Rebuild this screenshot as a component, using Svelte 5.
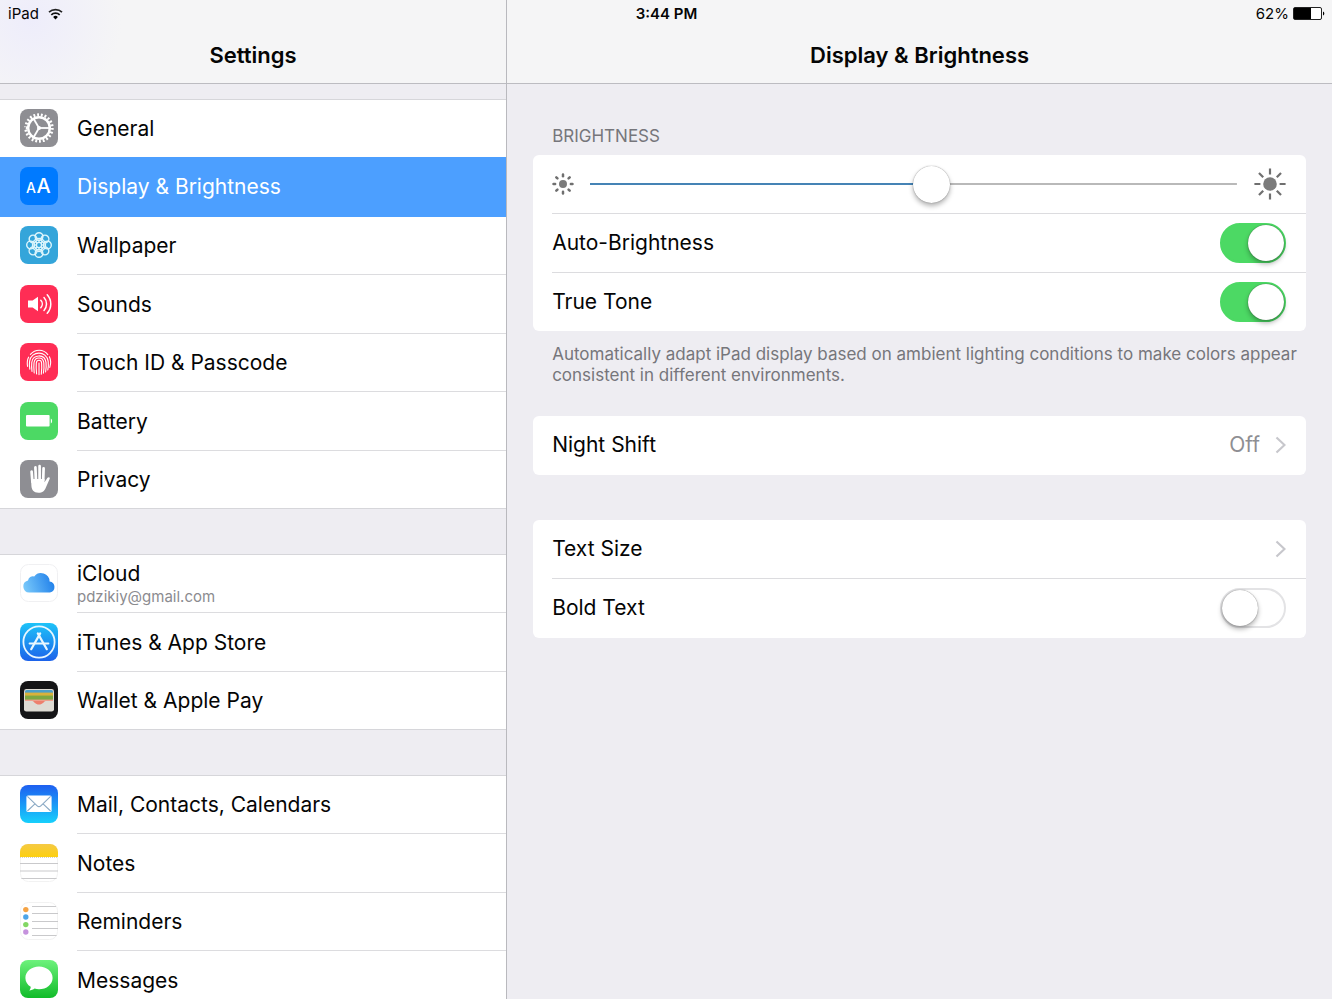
<script lang="ts">
	type Item = { id: string; label: string; detail?: string };

	const groups: Item[][] = [
		[
			{ id: 'general', label: 'General' },
			{ id: 'display', label: 'Display & Brightness' },
			{ id: 'wallpaper', label: 'Wallpaper' },
			{ id: 'sounds', label: 'Sounds' },
			{ id: 'touchid', label: 'Touch ID & Passcode' },
			{ id: 'battery', label: 'Battery' },
			{ id: 'privacy', label: 'Privacy' }
		],
		[
			{ id: 'icloud', label: 'iCloud', detail: 'pdzikiy@gmail.com' },
			{ id: 'store', label: 'iTunes & App Store' },
			{ id: 'wallet', label: 'Wallet & Apple Pay' }
		],
		[
			{ id: 'mail', label: 'Mail, Contacts, Calendars' },
			{ id: 'notes', label: 'Notes' },
			{ id: 'reminders', label: 'Reminders' },
			{ id: 'messages', label: 'Messages' }
		]
	];

	// Angles of the repeated icon parts
	const petals = [0, 45, 90, 135, 180, 225, 270, 315];
	const spokes = [0, 120, 240];

	// State
	let active = $state('display');
	let brightness = $state(53);
	let autoBrightness = $state(true);
	let trueTone = $state(true);
	let boldText = $state(false);

	function select(event: MouseEvent, id: string) {
		event.preventDefault();
		active = id;
	}
</script>

{#snippet icon(id: string)}
	<svg class="icon" viewBox="0 0 38 38" aria-hidden="true">
		{#if id === 'general'}
			<rect width="38" height="38" rx="8" fill="#8e8e93" />
			<g fill="none" stroke="#fff">
				<circle cx="19" cy="19" r="13.2" stroke-width="3" pathLength="44" stroke-dasharray="1 1" />
				<circle cx="19" cy="19" r="10.8" stroke-width="2.4" />
				{#each spokes as angle}
					<path d="M19 19H30" stroke-width="1.8" transform="rotate({angle} 19 19)" />
				{/each}
			</g>
			<circle cx="19" cy="19" r="2" fill="#fff" />
		{:else if id === 'display'}
			<rect width="38" height="38" rx="8" fill="#007aff" />
			<g fill="#fff" font-family="Inter, sans-serif" font-weight="500">
				<text x="6" y="26" font-size="14">A</text>
				<text x="16.5" y="26" font-size="20">A</text>
			</g>
		{:else if id === 'wallpaper'}
			<rect width="38" height="38" rx="8" fill="#34a5da" />
			<g fill="none" stroke="#dff6fc" stroke-width="1.4">
				{#each petals as angle}
					<circle cx="19" cy="10.6" r="3.9" transform="rotate({angle} 19 19)" />
				{/each}
				<circle cx="19" cy="19" r="6.6" stroke-width="1.2" />
				<circle cx="19" cy="19" r="2.6" />
				{#each petals as angle}
					<path d="M19 16.4v-3.6" stroke-width="1.2" transform="rotate({angle} 19 19)" />
				{/each}
			</g>
		{:else if id === 'sounds'}
			<rect width="38" height="38" rx="8" fill="#ff2d55" />
			<path d="M8 15.5h4.6L18 11.8v14.4l-5.4-3.8H8z" fill="#fff" />
			<g fill="none" stroke="#fff" stroke-width="1.5" stroke-linecap="round">
				<path d="M20.8 15.3a5.4 5.4 0 0 1 0 7.4" />
				<path d="M24 12.6a9.4 9.4 0 0 1 0 12.8" />
				<path d="M27.2 9.8a13.6 13.6 0 0 1 0 18.4" />
			</g>
		{:else if id === 'touchid'}
			<rect width="38" height="38" rx="8" fill="#ff2d55" />
			<g fill="none" stroke="#fff" stroke-width="1.1" stroke-linecap="round">
				<path d="M10.4 11.4c5-5.6 13-5.4 17.4.2" />
				<path d="M7.6 23.4c-.6-3.2-.6-6.4 1-9.2M29.4 13.8c1.8 3.6 1.4 7.4.4 10.6" />
				<path d="M9.8 26.2c-.6-3-.6-5-.2-8 1.6-10.6 17-11 18.6.2.4 3.2.2 5.6-.4 8.6" />
				<path d="M12 28.4c-.4-3.2-.6-6-.2-9.2 1-8.2 13-8.6 14.2.2.4 3.2.2 6-.4 9.6" />
				<path d="M14.2 30c-.4-3.6-.6-6.8-.2-10.2.8-6.2 9-6.4 9.8 0 .4 3.4.2 6.6-.4 10.4" />
				<path d="M16.6 31c-.4-3.8-.6-7.4-.3-11 .4-3.6 5-3.6 5.3 0 .3 3.6.2 7.2-.3 11.2" />
				<path d="M19 20v11.6" />
			</g>
		{:else if id === 'battery'}
			<rect width="38" height="38" rx="8" fill="#4cd964" />
			<rect x="6" y="13" width="23.6" height="11.6" rx="1" fill="#fff" />
			<path d="M30.8 16.4c1.8 1 1.8 4 0 5z" fill="#fff" />
		{:else if id === 'privacy'}
			<rect width="38" height="38" rx="8" fill="#8e8e93" />
			<g stroke="#fff" stroke-width="2.7" stroke-linecap="round" fill="none">
				<path d="M12.4 22L11.6 11.6M15.9 20L15.4 7.4M19.6 20V6.2M23.2 20l.4-11.6" />
			</g>
			<path
				d="M11.1 19h13.4v3.2l3-4.4c1-1.2 2.8-.4 2.2 1l-3.8 8.6c-1.400 3.4-3.4 5.400-7.400 5.400-5 0-6.8-3.200-7.100-7z"
				fill="#fff"
			/>
		{:else if id === 'icloud'}
			<defs>
				<linearGradient id="cloud-fill" x1="0" y1="0.6" x2="1" y2="0.4">
					<stop offset="0" stop-color="#78c8fa" />
					<stop offset="1" stop-color="#1f7fea" />
				</linearGradient>
			</defs>
			<rect x="0.5" y="0.5" width="37" height="37" rx="8" fill="#fff" stroke="#f0f0f2" />
			<path
				d="M9.2 28.600a6.200 6.200 0 0 1-1.200-12.200 5 5 0 0 1 6.200-4A8.600 8.600 0 0 1 29.600 17.400a5.700 5.700 0 0 1 .4 11.200z"
				fill="url(#cloud-fill)"
			/>
		{:else if id === 'store'}
			<defs>
				<linearGradient id="store-fill" x1="0" y1="0" x2="0" y2="1">
					<stop offset="0" stop-color="#1ec3f8" />
					<stop offset="1" stop-color="#1c62ea" />
				</linearGradient>
			</defs>
			<rect width="38" height="38" rx="8" fill="url(#store-fill)" />
			<g fill="none" stroke="#e8f7ff" stroke-linecap="round">
				<circle cx="19" cy="19" r="15.6" stroke-width="1.8" />
				<path d="M20.2 10.4L11.2 26.2M17.800 10.4l9 15.800" stroke-width="2.2" />
				<path d="M9.6 20.6h18.8" stroke-width="2" />
			</g>
		{:else if id === 'wallet'}
			<rect width="38" height="38" rx="8" fill="#151517" />
			<rect x="4" y="8" width="30" height="22.6" rx="2.4" fill="#dedbd4" />
			<path d="M5 13.2v-2.6a1.6 1.6 0 0 1 1.6-1.6h24.8a1.6 1.6 0 0 1 1.6 1.6v2.6z" fill="#4c9fc9" />
			<path d="M5 11.6h28v5H5z" fill="#d9b13c" />
			<path d="M5 14.6h28v5H5z" fill="#7da843" />
			<path d="M5 18.6h28v2H5z" fill="#ee9f8d" />
			<path d="M5 20h28v8.7a1 1 0 0 1-1 1H6a1 1 0 0 1-1-1z" fill="#dedbd4" />
			<path d="M12.400 20h13.200c-2 .6-2.800 3.600-6.600 3.600s-4.600-3-6.600-3.600z" fill="#ee7f6d" />
		{:else if id === 'mail'}
			<defs>
				<linearGradient id="mail-fill" x1="0" y1="0" x2="0" y2="1">
					<stop offset="0" stop-color="#1e5ff0" />
					<stop offset="1" stop-color="#17d0fc" />
				</linearGradient>
			</defs>
			<rect width="38" height="38" rx="8" fill="url(#mail-fill)" />
			<rect x="6.4" y="10.4" width="25.2" height="16.6" rx="1.6" fill="#fff" />
			<path
				d="M7.4 11.4l9.8 9.4c1 1 2.6 1 3.6 0l9.8-9.4M7.4 26l7.8-7.4M30.6 26l-7.8-7.4"
				fill="none"
				stroke="#8aa9c4"
				stroke-width="1.1"
			/>
		{:else if id === 'notes'}
			<defs>
				<linearGradient id="notes-fill" x1="0" y1="0" x2="0" y2="1">
					<stop offset="0" stop-color="#f5c944" />
					<stop offset="1" stop-color="#fdd00f" />
				</linearGradient>
			</defs>
			<rect x="0.5" y="0.5" width="37" height="37" rx="8" fill="#fff" stroke="#f2f2f2" />
			<path d="M0 13V8a8 8 0 0 1 8-8h22a8 8 0 0 1 8 8v5z" fill="url(#notes-fill)" />
			<path d="M0 19.5h38M0 27h38M1.4 34.5h35.2" stroke="#c9c9cb" />
			<path d="M0 13.5h38" stroke="#d8d2bd" stroke-dasharray="1 1" />
		{:else if id === 'reminders'}
			<rect x="0.5" y="0.5" width="37" height="37" rx="8" fill="#fff" stroke="#f2f2f2" />
			<circle cx="5.8" cy="7.6" r="2.7" fill="#f5a344" />
			<circle cx="5.8" cy="15" r="2.7" fill="#4da5e8" />
			<circle cx="5.8" cy="22.6" r="2.7" fill="#83d765" />
			<circle cx="5.8" cy="30" r="2.7" fill="#c592dd" />
			<path d="M12 4.5h24M12 11.5h26M12 19.5h26M12 26.5h26M12 33.5h24.6" stroke="#c9c9cb" />
		{:else if id === 'messages'}
			<defs>
				<linearGradient id="messages-fill" x1="0" y1="0" x2="0" y2="1">
					<stop offset="0" stop-color="#6df27c" />
					<stop offset="1" stop-color="#11bb29" />
				</linearGradient>
			</defs>
			<rect width="38" height="38" rx="8" fill="url(#messages-fill)" />
			<path
				d="M19 6.6c7.6 0 13.6 5 13.6 11.3S26.6 29.2 19 29.2c-1.6 0-3-.2-4.4-.6-1.2 1-3.4 1.9-5.4 1.9 1-.9 1.6-2.3 1.5-3.7-3.2-2-5.3-5.2-5.3-8.9C5.4 11.6 11.4 6.6 19 6.6z"
				fill="#fff"
			/>
		{/if}
	</svg>
{/snippet}

{#snippet sun(size: string)}
	<svg class="sun {size}" viewBox="0 0 32 32" aria-hidden="true">
		<circle cx="16" cy="16" r={size === 'large' ? 6.8 : 5.8} fill="#7b7b7b" />
		{#each petals as angle}
			<path
				d={size === 'large' ? 'M16 0.4v6' : 'M16 2.2v2.4'}
				stroke="#6f6f6f"
				stroke-width={size === 'large' ? 2.2 : 3.6}
				stroke-linecap={size === 'large' ? 'butt' : 'round'}
				transform="rotate({angle} 16 16)"
			/>
		{/each}
	</svg>
{/snippet}

{#snippet chevron()}
	<svg class="chevron" viewBox="0 0 11 18" aria-hidden="true">
		<path d="M1.5 1.5L9.5 9l-8 7.5" fill="none" stroke="#c7c7cc" stroke-width="2.2" />
	</svg>
{/snippet}

<div class="screen">
	<div class="status-bar">
		<span class="carrier">
			iPad
			<svg class="wifi" viewBox="0 0 15 12" aria-label="Wi-Fi">
				<path d="M1 4.2a9.4 9.4 0 0 1 13 0" fill="none" stroke="#222" stroke-width="1.6" />
				<path d="M3.3 6.8a6 6 0 0 1 8.4 0" fill="none" stroke="#111" stroke-width="1.7" />
				<path d="M7.5 11.4L5.1 8.9a3.5 3.5 0 0 1 4.8 0z" fill="#000" />
			</svg>
		</span>
		<time>3:44 PM</time>
		<span class="power">
			62%
			<svg class="cell" viewBox="0 0 32 13" aria-hidden="true">
				<rect x="0.5" y="0.5" width="28" height="12" rx="1.5" fill="#fff" stroke="#222" />
				<rect x="1" y="1" width="17" height="11" fill="#000" />
				<path d="M30 4.5c1.8.6 1.8 3.4 0 4z" fill="#000" />
			</svg>
		</span>
	</div>

	<aside class="sidebar">
		<header class="bar tinted"><h1>Settings</h1></header>
		<nav aria-label="Settings">
			{#each groups as group}
				<ul class="group">
					{#each group as item}
						<li>
							<a
								class="item"
								class:active={active === item.id}
								href={`#${item.id}`}
								aria-current={active === item.id ? 'page' : undefined}
								onclick={(event) => select(event, item.id)}
							>
								{@render icon(item.id)}
								<span class="text">
									<span class="label">{item.label}</span>
									{#if item.detail}
										<span class="detail">{item.detail}</span>
									{/if}
								</span>
							</a>
						</li>
					{/each}
				</ul>
			{/each}
		</nav>
	</aside>

	<main class="pane">
		<header class="bar"><h1>Display &amp; Brightness</h1></header>
		<div class="content">
			<section>
				<h2><label for="brightness">BRIGHTNESS</label></h2>
				<div class="card">
					<div class="row">
						{@render sun('small')}
						<input
							id="brightness"
							class="slider"
							type="range"
							min="0"
							max="100"
							bind:value={brightness}
							style="--fill: {brightness}%"
						/>
						{@render sun('large')}
					</div>
					<label class="row">
						<span>Auto-Brightness</span>
						<input class="switch" type="checkbox" bind:checked={autoBrightness} />
					</label>
					<label class="row">
						<span>True Tone</span>
						<input class="switch" type="checkbox" bind:checked={trueTone} />
					</label>
				</div>
				<p class="note">
					Automatically adapt iPad display based on ambient lighting conditions to make colors appear
					consistent in different environments.
				</p>
			</section>

			<section class="card">
				<button class="row" type="button">
					<span>Night Shift</span>
					<span class="value">Off {@render chevron()}</span>
				</button>
			</section>

			<section class="card">
				<button class="row" type="button">
					<span>Text Size</span>
					<span class="value">{@render chevron()}</span>
				</button>
				<label class="row">
					<span>Bold Text</span>
					<input class="switch" type="checkbox" bind:checked={boldText} />
				</label>
			</section>
		</div>
	</main>
</div>

<style>
	:global(body) {
		background: #eeedf2;
	}

	.screen {
		display: grid;
		grid-template-columns: 38% 1fr;
		grid-template-rows: 28px 1fr;
		height: 100vh;
		overflow: hidden;
		background: #eeedf2;
		color: #050505;
		font-family: Inter, 'Liberation Sans', sans-serif;
		font-size: 21px;
		line-height: 26px;
	}

	h1,
	h2,
	p,
	ul {
		margin: 0;
		padding: 0;
	}

	/* The status bar shares its grid row with the top of both panes */
	.status-bar {
		grid-area: 1 / 1 / 2 / 3;
		z-index: 1;
		display: grid;
		grid-template-columns: 1fr auto 1fr;
		align-items: center;
		padding: 0 7px 1px 8px;
		font-size: 15px;
		line-height: 18px;
	}

	.status-bar time {
		font-weight: 600;
	}

	.carrier,
	.power {
		display: flex;
		align-items: center;
		gap: 9px;
	}

	.power {
		justify-content: flex-end;
		gap: 4px;
	}

	.wifi {
		width: 15px;
		height: 12px;
	}

	.cell {
		width: 32px;
		height: 13px;
	}

	.sidebar,
	.pane {
		grid-row: 1 / 3;
		min-height: 0;
		display: flex;
		flex-direction: column;
	}

	.sidebar {
		grid-column: 1;
	}

	.pane {
		grid-column: 2;
		border-left: 1px solid #b9b9be;
	}

	.bar {
		flex: none;
		box-sizing: border-box;
		height: 84px;
		padding-top: 42px;
		border-bottom: 1px solid #bcbcc1;
		background: #f5f5f6;
		text-align: center;
	}

	.bar.tinted {
		background: radial-gradient(circle at 32px 20px, #eeedfb, #f5f5f6 90px);
	}

	h1 {
		font-size: 22px;
		font-weight: 600;
	}

	nav {
		overflow-y: auto;
		scrollbar-width: none;
		padding-top: 15px;
	}

	.group {
		display: grid;
		grid-auto-rows: 58px 59px;
		margin-bottom: 45px;
		border-top: 1px solid #d6d6da;
		background: #fff;
		list-style: none;
	}

	.group li {
		display: grid;
	}

	.item {
		display: flex;
		align-items: center;
		gap: 19px;
		padding-left: 20px;
		color: inherit;
		text-decoration: none;
	}

	.icon {
		flex: none;
		width: 38px;
		height: 38px;
		margin-bottom: 2px;
	}

	.text {
		flex: 1;
		align-self: stretch;
		display: flex;
		flex-direction: column;
		justify-content: center;
		padding-top: 1px;
		border-bottom: 1px solid #dcdcdf;
	}

	li:last-child .text {
		border-bottom: 0;
	}

	.group li:last-child {
		border-bottom: 1px solid #d6d6da;
	}

	/* Covers the separator above the selected row */
	.item.active {
		margin-top: -1px;
		background: #4c9fff;
		color: #fff;
	}

	.item.active .text {
		border-color: #4c9fff;
	}

	.detail {
		color: #8b8b8f;
		font-size: 15px;
		line-height: 20px;
	}

	.content {
		overflow-y: auto;
		scrollbar-width: none;
		padding: 42px 26px;
	}

	h2 {
		padding: 0 19px 8px;
		color: #76767b;
		font-size: 17px;
		font-weight: 400;
		line-height: 21px;
	}

	.card {
		display: grid;
		grid-auto-rows: 58px 59px;
		padding-bottom: 1px;
		border-radius: 6px;
		background: #fff;
		overflow: hidden;
	}

	section + .card {
		margin-top: 45px;
	}

	section:first-child + .card {
		margin-top: 30px;
	}

	.row {
		display: flex;
		align-items: center;
		justify-content: space-between;
		margin-left: 19px;
		padding: 0 20px 0 0;
		border: 0;
		background: none;
		color: inherit;
		font: inherit;
		text-align: left;
	}

	.row + .row {
		border-top: 1px solid #dcdcdf;
	}

	.value {
		display: flex;
		align-items: center;
		gap: 15px;
		color: #8e8e93;
	}

	.chevron {
		width: 11px;
		height: 18px;
	}

	.note {
		padding: 13px 0 0 19px;
		color: #76767b;
		font-size: 17px;
		line-height: 21px;
	}

	.sun {
		flex: none;
		width: 32px;
		height: 32px;
	}

	.sun.small {
		width: 22px;
		height: 22px;
	}

	.slider {
		flex: 1;
		appearance: none;
		height: 38px;
		margin: 0 17px 0 16px;
		background:
			linear-gradient(#4583b5, #4583b5) left center / var(--fill) 2px no-repeat,
			linear-gradient(#b9b9b9, #b9b9b9) center / 100% 2px no-repeat;
	}

	.slider::-webkit-slider-thumb {
		appearance: none;
		width: 37px;
		height: 37px;
		border-radius: 50%;
		background: #fff;
		box-shadow:
			0 0 1px rgba(0, 0, 0, 0.5),
			0 3px 5px rgba(0, 0, 0, 0.3);
	}

	.switch {
		appearance: none;
		box-sizing: border-box;
		width: 66px;
		height: 40px;
		margin: 0;
		padding: 0;
		border: 2px solid #e3e3e5;
		border-radius: 20px;
		background: #fff;
	}

	.switch::before {
		content: '';
		display: block;
		width: 36px;
		height: 36px;
		border-radius: 50%;
		background: #fff;
		box-shadow:
			0 0 1px rgba(0, 0, 0, 0.6),
			0 3px 5px rgba(0, 0, 0, 0.3);
	}

	.switch:checked {
		border-color: #4cd964;
		background: #4cd964;
	}

	.switch:checked::before {
		margin-left: auto;
	}
</style>
